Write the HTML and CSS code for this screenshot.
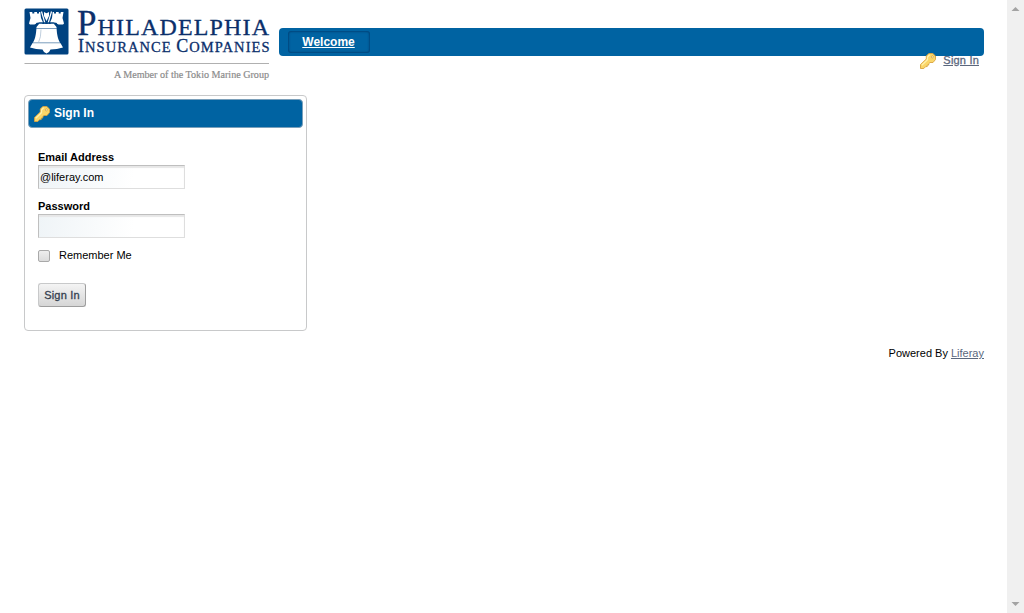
FILE: index.html
```html
<!DOCTYPE html>
<html lang="en">
<head>
<meta charset="utf-8">
<title>Welcome - Sign In</title>
<link rel="stylesheet" href="styles.css">
</head>
<body>
<svg class="defs" aria-hidden="true">
  <defs>
    <symbol id="key" viewBox="0 0 16 16">
      <path d="M.5 11.500 6.300 6V3L8.800.5h4L15.500 3v3.500L13 9.500H10L8.700 10.800v1.300H7.200v1.500H5.700L3.800 15.500H.5z" fill="#fad669" stroke="#d9a440" stroke-width=".9"/>
      <path d="M1.800 12.300 7.500 6.800V4L9.600 1.700" stroke="#fff0ac" stroke-width="1.300" fill="none"/>
      <circle cx="12.300" cy="3.900" r="1" fill="#fff" stroke="#cc962e" stroke-width=".7"/>
    </symbol>
  </defs>
</svg>
<div class="window">
  <div class="page">
    <header class="banner">
      <svg class="logo" width="247" height="76" viewBox="0 0 247 76">
        <rect x=".5" y=".5" width="44" height="46" rx="1.500" fill="#004280"/>
        <path d="M5 15.500 6.500 10 5.500 4h2.800v1.500h2V4h2.700v1.500h2V4h1.300L17 10l2 4.500-1 1.500h-3.500L13 14.500l-1.500 2H6z" fill="#fff"/>
        <path d="M40 15.500 38.500 10l1-6h-2.800v1.500h-2V4H32v1.500h-2V4h-1.300L28 10l-2 4.500 1 1.500h3.500L32 14.500l1.500 2H39z" fill="#fff"/>
        <path d="M20 4l2.500 1.200L25 4v4l-2.500 5L20 8z" fill="#fff"/>
        <path d="M17.500 3.500 21 15.500M27.500 3.500 24 15.500" fill="none" stroke="#fff" stroke-width="1.200"/>
        <path d="M11 17.500q2-2.500 4.500-2.500h14q2.500 0 4.500 2.500" fill="none" stroke="#004280" stroke-width="1.600"/>
        <path d="M15 16h15l2.500 3c.4 8 1.500 13 4.500 17l2 3.500q-6 1.800-12.500 2L25 44l-2.500 1.500L20 44l-1.500-2.500Q12 41.300 6 39.500L8 36c3-4 4.100-9 4.500-17z" fill="#fff"/>
        <path d="M12 20.500h21M9 34.800h27" fill="none" stroke="#336799" stroke-width=".65"/>
        <path d="M17 21.500q0 8-2.500 13" fill="none" stroke="#a5bad0" stroke-width=".7"/>
        <text class="brand" x="53" y="27" textLength="192"><tspan font-size="35">P</tspan><tspan font-size="24">HILADELPHIA</tspan></text>
        <text class="brand" x="54" y="44.300" textLength="191.500"><tspan font-size="18">I</tspan><tspan font-size="14.500">NSURANCE </tspan><tspan font-size="18">C</tspan><tspan font-size="14.500">OMPANIES</tspan></text>
        <path d="M.5 55.500h244.500" stroke="#b0b0b0" stroke-width="1.200"/>
        <text class="member" x="90" y="70" textLength="155" lengthAdjust="spacingAndGlyphs">A Member of the Tokio Marine Group</text>
      </svg>
      <div class="top">
        <nav class="nav"><a class="tab" href="#">Welcome</a></nav>
        <div class="dock"><svg class="key"><use href="#key"/></svg><a href="#">Sign In</a></div>
      </div>
    </header>
    <main class="portlet">
      <h1 class="title"><svg class="key"><use href="#key"/></svg><span>Sign In</span></h1>
      <form class="form">
        <label class="label" for="email">Email Address</label>
        <input class="field" id="email" type="text" value="@liferay.com">
        <label class="label" for="password">Password</label>
        <input class="field" id="password" type="password">
        <label class="remember"><input class="check" type="checkbox"><span>Remember Me</span></label>
        <button class="submit" type="button">Sign In</button>
      </form>
    </main>
    <footer class="footer">Powered By <a href="#">Liferay</a></footer>
  </div>
  <div class="scrollbar">
    <svg width="17" height="17"><path d="M4.500 11h8L8.500 7z" fill="#a3a3a3"/></svg>
    <svg width="17" height="17"><path d="M4.500 6h8l-4 4z" fill="#a3a3a3"/></svg>
  </div>
</div>
</body>
</html>
```

FILE: styles.css
```css
* { box-sizing: border-box; }
body {
  margin: 0;
  background: #fff;
  color: #000;
  font: 11px/13px "Liberation Sans", Arial, sans-serif;
}
.defs { display: none; }
.window { display: flex; height: 613px; overflow: hidden; }
.page { flex: 1; padding: 8px 23px 0 24px; }
.scrollbar {
  width: 17px;
  background: #f0f0f0;
  display: flex;
  flex-direction: column;
  justify-content: space-between;
}
.banner { display: flex; height: 87px; }
.logo { display: block; flex: none; overflow: visible; }
.brand { font-family: "Liberation Serif", serif; fill: #0b2f6b; stroke: #0b2f6b; stroke-width: .3px; }
.member { font-family: "Liberation Serif", serif; font-size: 10px; fill: #8c8c8c; stroke: #8c8c8c; stroke-width: .2px; }
.top { width: 705px; margin-left: 8px; padding-top: 20px; }
.nav {
  height: 28px;
  padding: 3px 9px;
  border-radius: 4px;
  background: #0063a2;
}
.tab {
  display: block;
  width: 82px;
  height: 22px;
  padding-right: 1px;
  border-radius: 3px;
  box-shadow: inset 0 0 2px 1px #00447a;
  color: #fff;
  font-size: 12px;
  font-weight: bold;
  line-height: 22px;
  text-align: center;
}
.key { width: 16px; height: 16px; flex: none; }
.dock {
  display: flex;
  justify-content: flex-end;
  gap: 7px;
  margin-top: -3px;
  padding-right: 5px;
  line-height: 15px;
}
.dock a, .footer a { color: #5b677d; }
.dock a { letter-spacing: .2px; -webkit-text-stroke: .3px #5b677d; }
.portlet {
  width: 283px;
  height: 236px;
  padding: 3px;
  border: 1px solid #c8c9ca;
  border-radius: 4px;
}
.title {
  display: flex;
  gap: 4px;
  height: 29px;
  margin: 0;
  padding: 6px 5px;
  border: 1px solid #7aa0bb;
  border-radius: 4px;
  background: #0063a2;
  color: #fff;
  font-size: 12px;
  line-height: 14px;
}
.form { display: flex; flex-direction: column; align-items: flex-start; padding: 23px 10px 0; }
.label { height: 14px; font-weight: bold; line-height: 13px; }
.field {
  width: 147px;
  height: 24px;
  margin: 0 0 11px;
  padding: 1px;
  border: 1px solid;
  border-color: #bfbfbf #dedede #dedede #bfbfbf;
  background: linear-gradient(100deg, #eff4f7, #fff 65%);
  box-shadow: inset 0 2px 1px #e7e7e7;
  font: inherit;
  outline: 0;
}
.remember { display: flex; gap: 9px; height: 34px; }
.check {
  appearance: none;
  width: 12px;
  height: 12px;
  margin: 1px 0 0;
  border: 1px solid #a9a9a9;
  border-radius: 2px;
  background: linear-gradient(#eee, #dcdcdc);
}
.submit {
  width: 48px;
  height: 24px;
  padding: 0;
  border: 1px solid;
  border-color: #c8c9ca #9e9e9e #9e9e9e #c8c9ca;
  border-radius: 3px;
  background: linear-gradient(#f4f4f4, #d6d6d6);
  color: #34404f;
  font: inherit;
  letter-spacing: .2px;
  -webkit-text-stroke: .3px #34404f;
}
.footer { width: 960px; margin-top: 16px; text-align: right; }
```
